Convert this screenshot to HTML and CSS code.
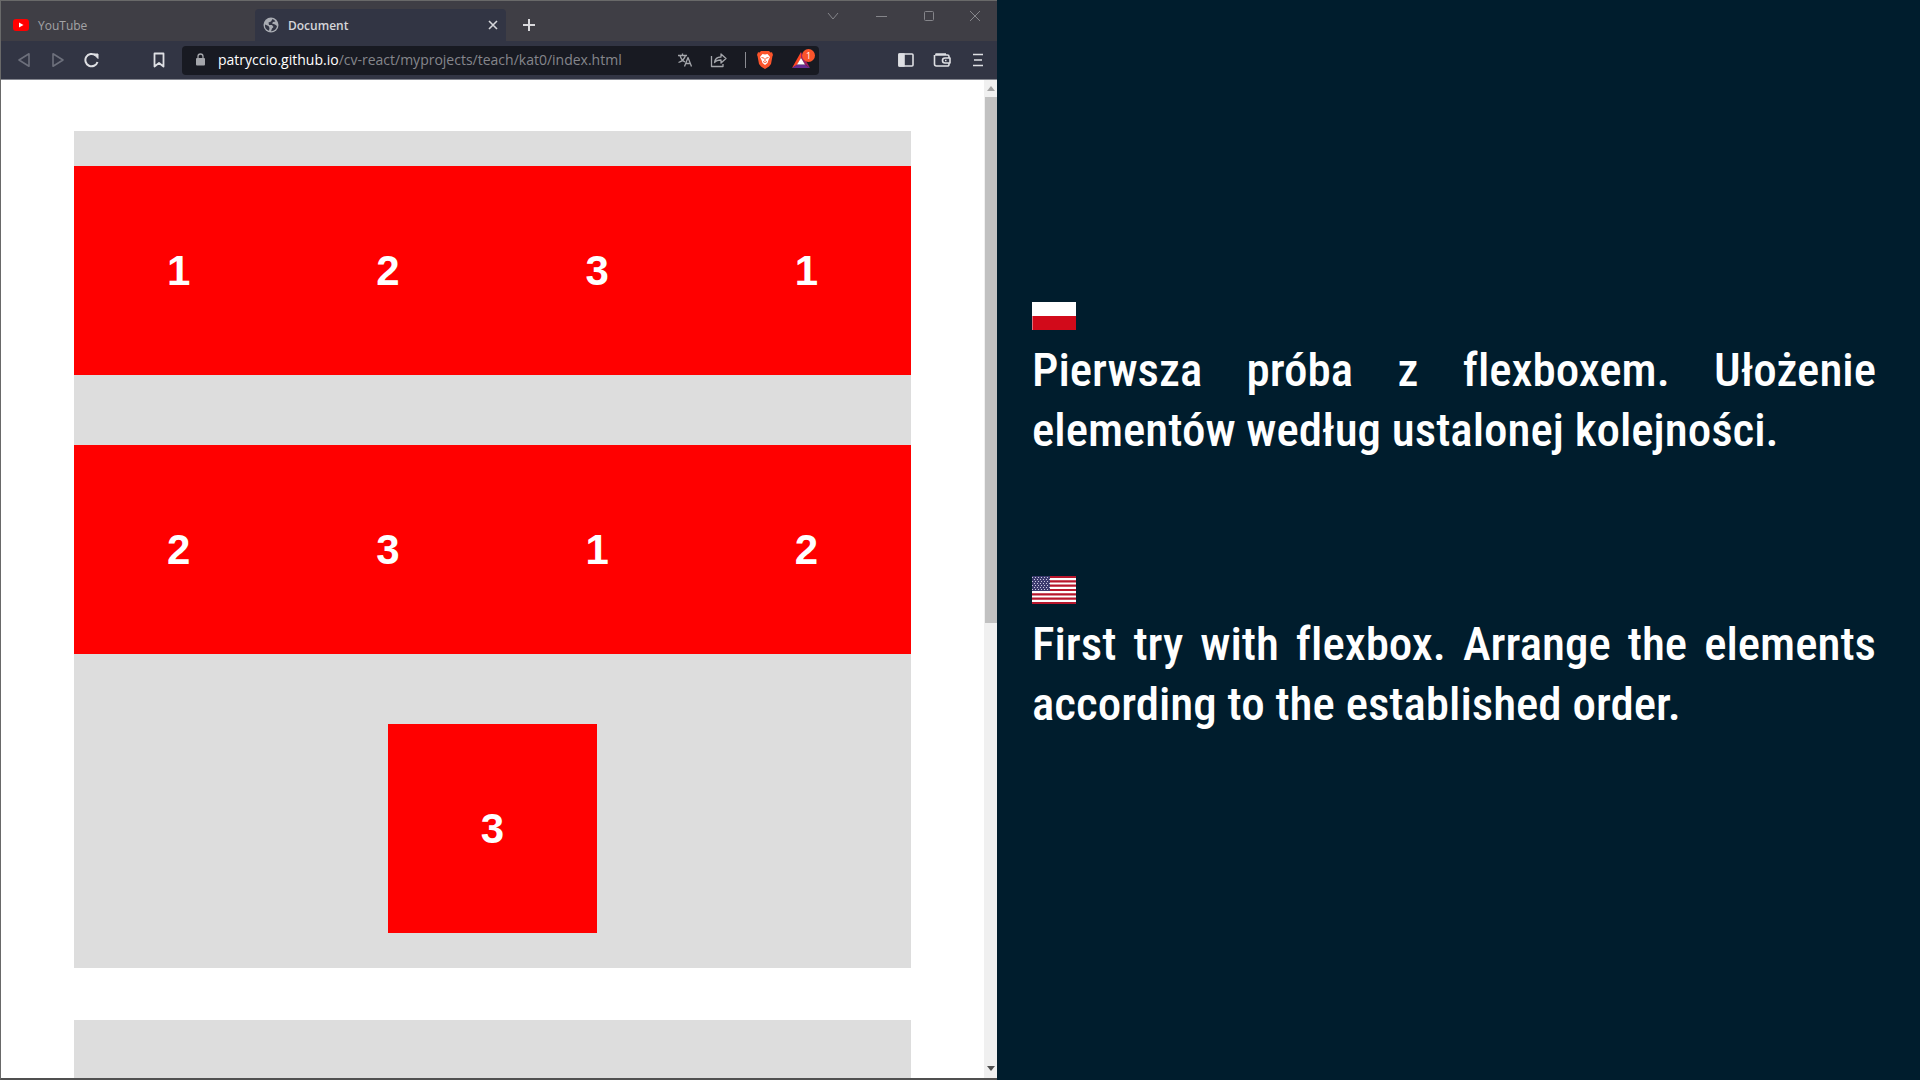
FILE: index.html
```html
<!DOCTYPE html>
<html lang="pl">
<head>
<meta charset="utf-8">
<meta name="viewport" content="width=device-width, initial-scale=1">
<title>Document</title>
<link rel="stylesheet" href="styles.css">
</head>
<body>
<main class="slide">
  <section class="browser" aria-label="Browser">
    <header class="chrome">
      <div class="tabs">
        <button class="tab" type="button">
          <svg width="16" height="12" viewBox="0 0 16 12"><rect width="16" height="12" rx="3" fill="#f00"/><path d="M6 3.500v5L10.500 6z" fill="#fff"/></svg>
          <span>YouTube</span>
        </button>
        <div class="tab tab-active">
          <svg width="16" height="16" viewBox="0 0 16 16"><circle cx="8" cy="8" r="7.500" fill="#a9acb3"/><path d="M9.500 2 8 4.500 5.500 5.500 6 8h3l1.500 2-1.500 1.500L8 14.200A6.200 6.200 0 0 0 14 9l-2-1.500-3-1 1-1.500 2.500-.500A6 6 0 0 0 9.500 2zM2 7.500l3.500 1.500 1 2-.500 2.700A6 6 0 0 1 2 7.500z" fill="#323544"/></svg>
          <span>Document</span>
          <button class="tab-close" type="button" aria-label="Close tab"><svg width="10" height="10" viewBox="0 0 10 10"><path d="m1 1 8 8M9 1 1 9" stroke="#d5d6da" stroke-width="1.600"/></svg></button>
        </div>
        <button class="tab-new" type="button" aria-label="New tab"><svg width="14" height="14" viewBox="0 0 14 14"><path d="M7 1v12M1 7h12" stroke="#d9d9dc" stroke-width="2"/></svg></button>
        <div class="window-controls">
          <button type="button" aria-label="Search tabs"><svg width="12" height="12" viewBox="0 0 12 12"><path d="m1 3 5 6 5-6"/></svg></button>
          <button type="button" aria-label="Minimize"><svg width="12" height="12" viewBox="0 0 12 12"><path d="M1 6.500h11"/></svg></button>
          <button type="button" aria-label="Maximize"><svg width="12" height="12" viewBox="0 0 12 12"><rect x="1.500" y="1.500" width="9" height="9" rx="1"/></svg></button>
          <button type="button" aria-label="Close"><svg width="12" height="12" viewBox="0 0 12 12"><path d="m1 1 10 10M11 1 1 11"/></svg></button>
        </div>
      </div>
      <div class="toolbar">
        <button class="tool dim" type="button" aria-label="Back"><svg width="14" height="16" viewBox="0 0 14 16"><path d="M12 1.800v12.400L2 8z"/></svg></button>
        <button class="tool dim" type="button" aria-label="Forward"><svg width="14" height="16" viewBox="0 0 14 16"><path d="M2 1.800v12.400L12 8z"/></svg></button>
        <button class="tool" type="button" aria-label="Reload"><svg width="16" height="16" viewBox="0 0 16 16"><path d="M13.500 10A6.200 6.200 0 1 1 11.500 3.300" stroke-width="2"/><path d="M9.500 2h4.500v4.500z" fill="#dedfe3" stroke-width="1"/></svg></button>
        <button class="tool bookmark" type="button" aria-label="Bookmark"><svg width="14" height="16" viewBox="0 0 14 16"><path d="M2.500 1.500h9v13L7 11l-4.500 3.500z" stroke-width="1.800"/></svg></button>
        <div class="address">
          <svg class="lock" width="10" height="14" viewBox="0 0 10 14"><rect x="1" y="5" width="9" height="7.500" rx="1" fill="#a4a6ab"/><path d="M3 5V3.500a2.500 2.500 0 0 1 5 0V5" fill="none" stroke="#a4a6ab" stroke-width="1.300"/></svg>
          <div class="url" role="textbox" aria-label="Address" contenteditable="true" spellcheck="false"><b>patryccio.github.io</b>/cv-react/myprojects/teach/kat0/index.html</div>
          <button class="tool thin" type="button" aria-label="Translate"><svg width="16" height="16" viewBox="0 0 16 16"><path d="M1 3.500h9M5.500 1.500v2M3 3.500C4 7 6 9 8 10M8.500 3.500C7.500 7 4.500 9.500 1.500 10.500M7.500 14.500l3.500-9 3.500 9M9 11.500h4.500"/></svg></button>
          <button class="tool thin" type="button" aria-label="Share"><svg width="18" height="16" viewBox="0 0 18 16"><path d="M1.500 4v10.500H13V12M4.500 10.500C5 6.500 7 5 11 5V2l5 4.500-5 4.500V8C8 8 6 8.500 4.500 10.500z"/></svg></button>
          <span class="divider"></span>
          <button class="tool wide" type="button" aria-label="Brave Shields"><svg width="16" height="18" viewBox="0 0 16 18"><path d="M4 0h8l1.500 1.500L15 1.300l1 2.700-.5 1L14 13l-2 2.500L8 18l-4-2.500L2 13 .5 5 0 4l1-2.700 1.500.2z" fill="#fb542b"/><path d="M5.500 3 8 3.500 10.500 3 13 6l-1.500 3-1 3L8 14l-2.500-2-1-3L3 6z" fill="#fff"/><path d="M4.500 6.500 7 7.200M11.500 6.500 9 7.200M8 7v3M6 10.500l2 1 2-1" fill="none" stroke="#fb542b" stroke-width="1"/></svg></button>
          <button class="tool wide rewards" type="button" aria-label="Rewards, 1 new"><svg width="20" height="18" viewBox="0 0 20 18"><path d="M10 1 1 17l5-3 4-7z" fill="#ff4724"/><path d="M1 17h18l-5-3.500H6z" fill="#662d91"/><path d="m10 1 9 16-5-3.500L10 7z" fill="#9e1f63"/><path d="m10 7 4 6.500H6z" fill="#fff"/></svg><span class="badge">1</span></button>
        </div>
        <div class="side-tools">
          <button class="tool wide" type="button" aria-label="Sidebar"><svg width="16" height="16" viewBox="0 0 16 16"><rect x="1" y="2" width="14" height="12" rx="1"/><path d="M1 2h5v12H1z" fill="#dedfe3"/></svg></button>
          <button class="tool wide" type="button" aria-label="Wallet"><svg width="18" height="16" viewBox="0 0 18 16"><path d="M16 6V4.500A1.500 1.500 0 0 0 14.500 3H3a1.500 1.500 0 0 1 0-1h10M1.500 3v9A2 2 0 0 0 3.500 14h11a1.500 1.500 0 0 0 1.500-1.500V11M17 6h-5a2.500 2.500 0 0 0 0 5h5zM12 8.500h1.500"/></svg></button>
          <button class="tool wide" type="button" aria-label="Menu"><svg width="12" height="16" viewBox="0 0 12 16"><path d="M1 2.500h10M2 8h8M1 13.500h10"/></svg></button>
        </div>
      </div>
    </header>
    <div class="viewport">
      <div class="page">
        <div class="box">
          <div class="item">1</div><div class="item">2</div><div class="item">3</div><div class="item">1</div>
          <div class="item">2</div><div class="item">3</div><div class="item">1</div><div class="item">2</div>
          <div class="item">3</div>
        </div>
        <div class="box"></div>
      </div>
      <div class="scrollbar">
        <svg width="8" height="5" viewBox="0 0 8 5"><path d="M0 5h8L4 0z" fill="#a3a3a3"/></svg>
        <div class="track"><div class="thumb"></div></div>
        <svg width="8" height="5" viewBox="0 0 8 5"><path d="M0 0h8L4 5z" fill="#505050"/></svg>
      </div>
    </div>
  </section>
  <section class="captions">
    <article class="caption" lang="pl">
      <svg class="flag" width="44" height="28" viewBox="0 0 44 28" role="img" aria-label="Polski"><path fill="#fff" d="M0 0h44v14H0z"/><path fill="#d20a1a" d="M0 14h44v14H0z"/><path fill="#e0707a" d="M0 14h1v14H0z"/></svg>
      <p>Pierwsza próba z flexboxem. Ułożenie elementów według ustalonej kolejności.</p>
    </article>
    <article class="caption" lang="en">
      <svg class="flag" width="44" height="28" viewBox="0 0 44 28" role="img" aria-label="English">
        <defs><pattern id="stars" width="3" height="4" patternUnits="userSpaceOnUse"><path d="M0 1h1v1H0zM2 3h1v1H2z" fill="#c9c8df"/></pattern></defs>
        <path fill="#fff" d="M0 0h44v28H0z"/>
        <path d="M0 1h44M0 5.300h44M0 9.600h44M0 14h44M0 18.300h44M0 22.600h44M0 27h44" stroke="#b8162c" stroke-width="2.150"/>
        <path fill="#3c3b6e" d="M0 0h18v15H0z"/><path fill="url(#stars)" d="M0 0h18v15H0z"/>
      </svg>
      <p>First try with flexbox. Arrange the elements according to the established order.</p>
    </article>
  </section>
</main>
</body>
</html>
```
FILE: styles.css
```css
* { box-sizing: border-box; }
body { margin: 0; background: #001d2d; }
button {
  margin: 0;
  padding: 0;
  border: 0;
  background: none;
  color: inherit;
  font: inherit;
  display: flex;
  align-items: center;
  justify-content: center;
}
svg { flex: none; display: block; }

.slide {
  display: grid;
  grid-template-columns: 997fr 923fr;
  height: 100vh;
  overflow: hidden;
}

/* Browser window */
.browser {
  display: flex;
  flex-direction: column;
  min-width: 0;
  min-height: 0;
  border: 1px solid #696969;
  border-right: 0;
  border-bottom: 2px solid #505050;
  background: #fff;
}
.chrome {
  flex: none;
  background: #323544;
  border-bottom: 1px solid #84868f;
  font-family: "Open Sans", "Noto Sans", sans-serif;
}
.tabs {
  display: flex;
  align-items: flex-end;
  height: 40px;
  background: #3f3e45;
}
.tab {
  display: flex;
  justify-content: flex-start;
  align-items: center;
  gap: 9px;
  width: 254px;
  height: 32px;
  padding: 0 12px;
  color: #a3a3a6;
  font-size: 12px;
}
.tab-active {
  width: 251px;
  padding: 0 8px;
  border-radius: 4px 4px 0 0;
  background: #323544;
  color: #d5d6da;
  font-weight: 600;
}
.tab-close { width: 10px; height: 16px; margin-left: auto; }
.tab-new { width: 46px; height: 32px; }
.window-controls {
  display: flex;
  align-self: flex-start;
  margin-left: auto;
}
.window-controls button { width: 48px; height: 30px; }
.window-controls svg { fill: none; stroke: #85858a; stroke-width: 1; }
.window-controls button:last-child { width: 44px; }

.toolbar {
  display: flex;
  align-items: center;
  height: 38px;
  padding: 0 1px 0 6px;
}
.tool { flex: none; width: 34px; height: 30px; }
.tool > svg {
  fill: none;
  stroke: #dedfe3;
  stroke-width: 1.6;
  stroke-linejoin: round;
}
.tool.wide { width: 36px; }
.tool.dim > svg { stroke: #6d707c; }
.tool.thin > svg { stroke: #a4a6ab; stroke-width: 1.3; }
.tool.bookmark { margin: 0 6px 0 33px; }

.address {
  display: flex;
  align-items: center;
  flex: 0 1 637px;
  min-width: 0;
  height: 29px;
  border-radius: 4px;
  background: #181a22;
}
.lock { margin: 0 13px; }
.url {
  flex: 1;
  min-width: 0;
  overflow: hidden;
  white-space: nowrap;
  color: #85868c;
  font-size: 14px;
  line-height: 20px;
}
.url b { color: #fff; font-weight: 400; }
.divider { width: 1px; height: 16px; margin: 0 1px 0 9px; background: #8b8c92; }
.address .wide > svg { stroke: none; }
.rewards { position: relative; }
.badge {
  position: absolute;
  top: 4px;
  right: 4px;
  width: 13px;
  height: 13px;
  border-radius: 50%;
  background: #fb542b;
  color: #fff;
  font-size: 9px;
  line-height: 13px;
}
.side-tools { display: flex; margin-left: auto; }

/* Page shown in the window */
.viewport { display: flex; flex: 1; min-height: 0; }
.page {
  flex: 1;
  display: flex;
  flex-direction: column;
  gap: 52px;
  padding: 51px 73px 0;
  overflow: hidden;
}
.box {
  flex: none;
  display: flex;
  flex-wrap: wrap;
  justify-content: center;
  align-content: space-around;
  aspect-ratio: 1;
  background: #ddd;
}
.item {
  display: flex;
  align-items: center;
  justify-content: center;
  width: 25%;
  aspect-ratio: 1;
  background: #f00;
  color: #fff;
  font: bold 42px/48px "Liberation Sans", Arial, sans-serif;
}
.scrollbar {
  display: flex;
  flex-direction: column;
  align-items: center;
  gap: 6px;
  width: 13px;
  padding: 6px 0 7px;
  background: #f0f0f0;
}
.track { flex: 1; align-self: stretch; padding-left: 1px; }
.thumb { height: 54.6%; background: #c1c1c1; }

/* Captions */
.captions {
  display: flex;
  flex-direction: column;
  justify-content: center;
  gap: 116px;
  padding: 0 44px 44px 35px;
  color: #fff;
}
.caption p {
  margin: 10px 0 0;
  font: 500 47px/60px "Roboto Condensed", "Liberation Sans Narrow", Roboto, sans-serif;
  font-variant-ligatures: none;
  text-align: justify;
}
```
